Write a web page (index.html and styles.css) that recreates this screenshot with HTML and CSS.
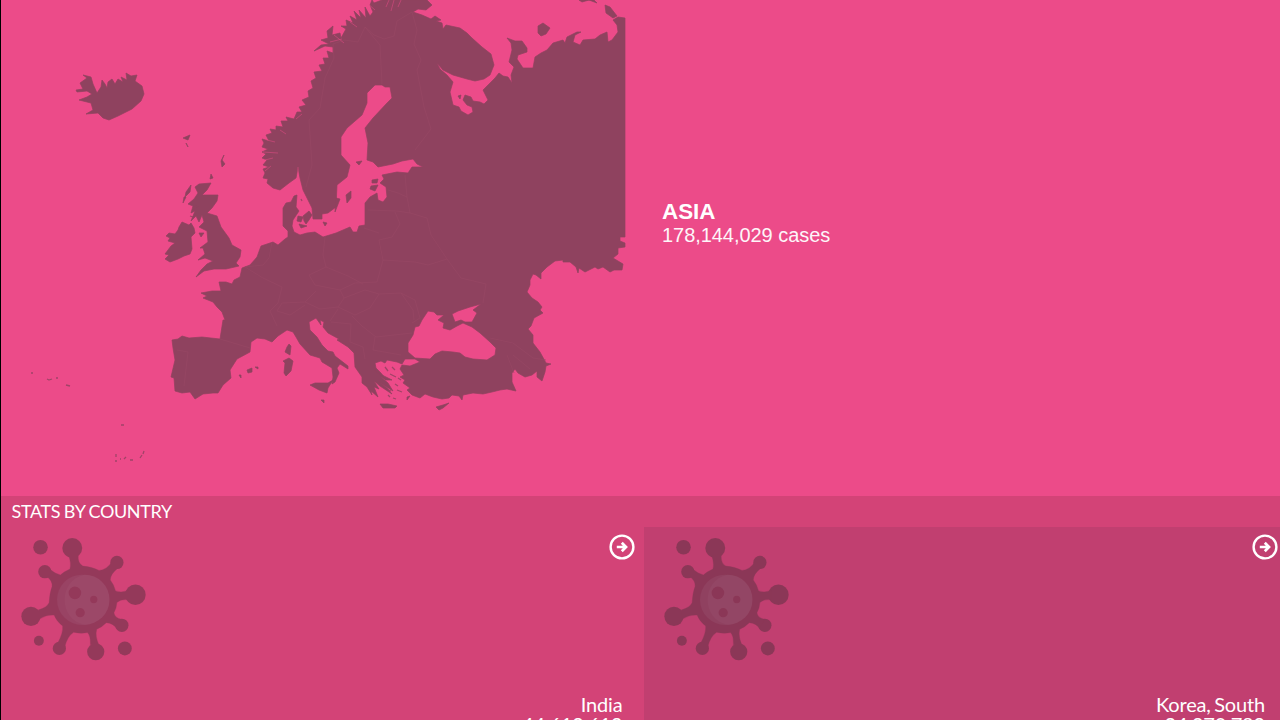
FILE: index.html
```html
<!DOCTYPE html>
<html lang="en">
<head>
<meta charset="utf-8">
<title>Stats by country</title>
<link rel="stylesheet" href="styles.css">
</head>
<body>
<svg class="defs" aria-hidden="true">
  <defs>
    <symbol id="virus" viewBox="62 158 378 372">
      <g fill="#57313f">
        <circle cx="121" cy="186" r="22"/><circle cx="217" cy="188" r="30"/><circle cx="134" cy="260" r="20"/><circle cx="352" cy="232" r="20"/><circle cx="408" cy="330" r="31"/><circle cx="92" cy="395" r="29"/><circle cx="367" cy="422" r="20"/><circle cx="116" cy="469" r="15"/><circle cx="178" cy="492" r="20"/><circle cx="288" cy="502" r="26"/><circle cx="376" cy="492" r="21"/>
        <path d="M206 210Q215 235 210 252Q192 260 181 270Q165 266 148 252L141 275Q158 288 156 305Q149 323 147 354Q141 368 114 376L118 403Q139 389 162 391Q170 411 188 424Q190 445 173 476L194 488Q202 455 221 443Q244 448 263 444Q273 453 272 481L298 483Q285 454 291 434Q307 427 320 414Q340 415 352 432L366 404Q345 400 343 384Q351 370 352 353Q365 342 386 345L386 317Q364 325 348 318Q343 299 332 285Q332 267 354 250L340 226Q321 256 298 256Q276 245 249 243Q233 235 235 209Z" stroke="#57313f" stroke-width="1"/>
      </g>
      <circle cx="247" cy="345" r="76" fill="#604452"/>
      <path d="M254 269A75 75 0 0 1 254 420C174 405 174 285 254 269Z" fill="#674e5b"/>
      <g fill="#57313f"><circle cx="225" cy="324" r="19"/><circle cx="282" cy="344" r="11"/><circle cx="241" cy="384" r="14"/></g>
    </symbol>
    <symbol id="go" viewBox="0 0 26 26">
      <circle cx="13" cy="13" r="11.4" fill="none" stroke="#fff" stroke-width="2.4"/>
      <path d="M7.8 13H16.5M12.8 8.8L17 13L12.8 17.2" fill="none" stroke="#fff" stroke-width="2.7"/>
    </symbol>
  </defs>
</svg>
<main class="page">
  <section class="region">
    <svg class="map" viewBox="0 0 640 496" role="img" aria-label="Europe">
      <g class="land">
        <path fill-rule="evenodd" d="M372 0L374 3L382 0H427L432 5L426 10L418 9L413 12L422 15L431 19L435 16L441 20L436 21L442 23L443 29L446 25L460 28L467 33L472 38L482 47L491 54L494 65L490 75L484 79L475 81L467 79L453 75L443 70L437 63L440 69L447 75L453 82L450 92L453 105L459 107L461 111L468 115L473 112L472 107L467 105L463 100L465 95L471 97L473 101L480 102L484 104L488 100L483 90L488 85L495 78L499 73L503 76L508 77L512 83L511 75L514 67L509 62L512 50L511 43L507 38L515 41L522 41L527 48L527 52L518 55L517 59L523 68L533 68L535 57L541 53L547 50L553 43L563 40L565 43L567 37L577 32L581 32L575 35L573 42L580 45L583 40L595 39L600 35L607 32L608 42L612 40L618 32L617 25L613 20L618 17L625 18V237L620 237L620 241L625 243V247L618 248L618 254L613 258L623 264L622 270L614 270L610 272L603 267L598 269L595 267L585 272L579 268L578 273L576 267L570 262L563 262V260L555 261L547 267L541 273V279L536 275L533 274L530 280L530 285L527 292L532 298L538 302L542 307L540 310L543 313L534 318L531 326L528 329L533 335L533 343L540 352L546 363L551 364L546 366L545 372L542 381L537 377L537 371L532 375L525 377L518 373L515 369L512 373L512 382L516 391L507 389L500 390L492 392L483 394L473 393L463 395L462 400L459 396L452 395L449 398L442 399L433 397L425 394L420 398L412 395L407 390L410 388L403 383L405 380L400 377L404 375L400 369L402 365L410 366L420 362L415 359L405 359L402 364L397 362L387 360L385 363L381 361L375 363L376 368L381 373L386 380L380 376L388 383L393 391L385 386L379 382L387 388L392 394L380 386L374 381L379 389L374 387L378 397L371 391L372 395L367 387L362 383L362 377L355 367L354 353L348 347L337 340L339 339L328 333L323 327L324 322L320 320L321 325L316 318L309 322L310 330L317 337L322 345L328 351L333 352L335 356L348 366L348 369L340 364L337 368L339 373L335 382L332 384L333 377L332 368L322 362L320 358L310 355L300 344L296 337L293 332L287 330L278 336L272 342L265 339L257 338L251 342L250 352L237 359L230 370L231 378L223 385L218 393L213 393L203 394L195 399L190 392L182 393L175 391L174 378L171 377L175 360L173 348L172 340L178 339L182 336L189 338L202 337L220 339L223 320L225 320L222 312L217 307L213 302L203 298L207 296L201 293L212 291L221 291L219 282L226 282L232 284L234 280L240 277L242 268L250 265L257 257L261 246L273 242L278 245L285 239L288 237V231L283 226V208L286 203L291 202L294 196L297 195L296 207L299 211L293 220L292 226L294 232L300 235L307 233L315 232L323 237L336 233L350 227L353 232L357 232L359 226L365 225L365 203L370 197L377 193L378 200L383 202L387 197L386 187L380 183L384 179L382 175L397 172L408 173L412 167L423 167L417 164L413 159L402 161L393 164L378 167L373 162L367 160L368 143L365 128L373 118L387 103L392 98L390 87L385 87L382 85L375 85L367 93L367 103L362 115L347 128L341 137L341 155L350 165L347 177L337 185L336 207L328 213L322 214L322 219L313 219L312 208L303 190L300 178L298 168L296 178L289 183L280 190L273 188L267 183L268 179L263 178L265 173L263 169L269 167L263 165L267 160L262 158L266 154L262 152L268 149L262 147L264 143L262 139L269 141L266 135L272 133L270 129L276 130L276 126L283 127L281 121L288 121L286 117L294 119L297 112L302 112L299 107L306 105L302 100L309 97L308 91L313 88L311 81L316 78L314 72L322 71L319 65L325 64L323 58L329 58L327 51L333 53L333 47L325 46L314 51L321 45L329 44L321 40L328 38L327 31L333 26L332 35L340 33L341 38L346 29L341 26L347 26L346 20L353 23L350 16L357 20L354 11L361 18L359 10L366 18L365 7L370 16L373 12L370 5ZM430 359L415 358L408 352L408 343L413 335L415 327L419 326L422 320L428 311L434 312L437 315L444 315L438 320L444 323L443 328L450 330L457 326L463 323L472 327L480 333L490 342L496 348L495 355L487 360L473 359L465 357L460 353L453 352L442 351L435 354ZM452 314L458 311L470 307L481 304L473 310L477 313L472 322H465L461 320L455 322Z"/>
        <path d="M579 0L582 2L589 0L597 3L594 0ZM605 5L610 7L617 16L613 18L606 13ZM538 26L543 23L550 28L546 34L541 36L538 33ZM76 90L83 89L80 83L87 78L83 75L91 77L93 84L97 93L101 87L102 80L105 84L107 88L108 82L112 79L115 84L118 79L123 82L121 77L127 80L126 73L131 76L137 75L135 81L142 86L144 94L141 101L132 109L118 116L109 120L103 118L98 113L86 114L93 110L91 103L79 100L87 97L92 94L87 91L77 92ZM183 138L190 135L188 140ZM186 143L188 147ZM224 155L222 160L225 164L222 167L221 161ZM211 174L213 178L210 179ZM191 185L186 192L185 197L190 192ZM184 197L183 203L186 197ZM199 184L211 183L207 190L202 195L206 195L218 195L217 201L212 208L207 213L217 216L221 227L229 238L232 245L241 250L240 257L236 263L239 266L226 269L214 269L204 271L196 277L201 270L207 264L213 261L205 258L198 260L205 254L203 248L200 248L208 242L207 231L199 227L204 222L202 215L199 222L196 216L191 221L195 211L191 213L193 206L188 204L194 199L198 193L195 187ZM179 227L182 222L189 225L191 223L194 228L195 233L191 237L192 249L190 254L184 256L178 259L170 262L165 259L169 255L165 254L171 246L175 243L168 241L170 238L166 236L169 233L175 234L178 230ZM199 233L204 233L201 237ZM289 344L291 346L290 355L285 352L287 347ZM289 358L293 361L291 371L286 376L284 373L285 363L283 361ZM310 385L315 383L328 383L333 380L328 388L327 393L319 390ZM247 370L252 368L252 372L248 373ZM255 367H258V369ZM239 375H241V378ZM321 400H324V403ZM380 404L388 404L397 406L395 408L383 408ZM436 407L443 405L449 403L443 408L439 410ZM298 216L303 217L301 222L297 221ZM303 216L309 211L312 215L309 220L306 224L304 221ZM299 224L307 226L301 228ZM323 222L327 223L325 226ZM346 195L351 191L351 198L347 203ZM336 198L340 199L335 212ZM372 180L378 179L377 183L372 183ZM371 186L378 185L375 191L370 189ZM356 162L362 161L359 165ZM458 96L461 95L460 99ZM407 397L410 396L407 400ZM374 370L384 376L392 380L386 380Z"/>
        <path d="M31 373H33M47 379L49 380L52 379M56 378H58M66 385L70 386M121 425H124M115 461H117M116 454V457M120 459H121M124 459L126 457M130 460H133M140 458L142 455M143 454L144 451M301 199L302 201M195 206L198 207M190 216L193 217M392 367L395 370M385 367L388 371M390 374L396 377M395 384L398 386M386 389L391 391M397 390L402 392M388 395L390 397M393 398L396 399M398 378L401 380" class="islets"/>
      </g>
      <path class="borders" d="M306 187L312 165L309 120L320 108L325 78L334 58L333 44L344 40L358 42L365 27L374 35L384 39L394 36L397 21L412 12L417 30L414 44L421 60L417 70L424 107L431 129L415 150M365 27L380 45L382 84M388 190L398 193L407 197L405 175M407 197L410 213L397 211L368 210M410 213L427 218L431 235L447 259L428 265L415 262L383 260L379 240L392 237L400 224L395 212M364 228L379 233M325 237L323 255L326 267L309 275L315 285L340 290L355 283L377 282L383 260M326 267L348 276L363 284M447 259L461 278L486 284L483 303M272 242L269 258L263 265L245 267L263 278L282 287L278 303L270 311L277 326M282 303L305 302L316 291M282 303L277 311L290 315L305 305M305 302L320 309L338 307L344 298L340 290M338 307L355 315L370 308L379 294L365 290L344 298M379 294L401 293L413 310L414 320M401 293L415 300L420 318L412 323M352 316L362 326L376 337L412 333M375 337L373 350L401 355M331 322L351 324L350 342L363 347L365 359M330 321L338 309M220 339L250 348M177 350L188 352L184 386M490 338L513 343L533 358L546 360M507 355L514 373M513 355L530 369"/>
      <path class="fjords" d="M263 152L278 153M265 160L273 158M265 171L271 166M267 140L275 142M280 130L286 134M296 119L302 114M330 42L342 39M334 35L344 43M350 22L357 27M367 3L375 10M389 0L386 7M394 0L391 11M401 0L398 7M298 167L298 179"/>
    </svg>
    <div class="summary">
      <h2 class="name">ASIA</h2>
      <p class="cases">178,144,029 cases</p>
    </div>
  </section>
  <section class="stats">
    <h3 class="title">STATS BY COUNTRY</h3>
    <div class="grid">
      <article class="card">
        <div class="top"><svg class="virus"><use href="#virus"/></svg><svg class="go"><use href="#go"/></svg></div>
        <div class="info"><p>India</p><p>44,619,619</p></div>
      </article>
      <article class="card dark">
        <div class="top"><svg class="virus"><use href="#virus"/></svg><svg class="go"><use href="#go"/></svg></div>
        <div class="info"><p>Korea, South</p><p>24,970,789</p></div>
      </article>
    </div>
  </section>
</main>
</body>
</html>
```
FILE: styles.css
```css
* { box-sizing: border-box; margin: 0; padding: 0; }
body { height: 720px; overflow: hidden; background: #ec4b89; color: #fff; font-family: Lato, "Liberation Sans", sans-serif; }
.defs { display: none; }
.page { height: 720px; overflow: hidden; border-left: 1px solid #000; }
.region { display: flex; align-items: center; height: 496px; }
.map { flex: none; width: 640px; height: 496px; margin-left: -1px; }
.land { fill: #8f425f; stroke: #8f425f; stroke-width: .7; stroke-linejoin: round; }
.islets { fill: none; stroke-width: 1.3; stroke-opacity: .8; }
.borders { fill: none; stroke: #984865; stroke-width: .9; stroke-opacity: .7; }
.fjords { fill: none; stroke: #ec4b89; stroke-width: .8; stroke-opacity: .6; }
.summary { margin: -50px 0 0 22px; font-family: "Liberation Sans", Arial, sans-serif; }
.name { font-size: 22.4px; line-height: 25px; font-weight: 700; }
.cases { font-size: 20px; line-height: 23px; letter-spacing: -.05px; opacity: .95; }
.stats { background: #d34377; }
.title { height: 31px; padding-left: 10.5px; font-size: 18px; line-height: 31px; font-weight: 400; letter-spacing: -.35px; word-spacing: -.6px; }
.grid { display: grid; grid-template-columns: 642.5px 642.5px; }
.card { display: flex; flex-direction: column; justify-content: space-between; height: 207px; }
.dark { background: #c13f70; }
.top { display: flex; justify-content: space-between; padding: 7px 8.5px 0 20px; }
.virus { width: 125px; height: 123px; margin-top: 4px; opacity: .5; }
.go { width: 26px; height: 26px; }
.info { padding-right: 21px; text-align: right; font-size: 20px; line-height: 20px; letter-spacing: -.15px; word-spacing: -1.6px; }
```
